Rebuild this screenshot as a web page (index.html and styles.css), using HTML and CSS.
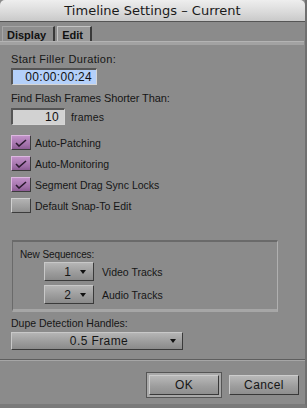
FILE: index.html
```html
<!DOCTYPE html>
<html>
<head>
<meta charset="utf-8">
<link rel="stylesheet" href="styles.css">
</head>
<body>
<div class="window">
  <div class="titlebar">Timeline Settings – Current</div>
  <div class="tabs">
    <div class="tab">Display</div>
    <div class="tab active">Edit</div>
  </div>
  <div class="strip"></div>
  <div class="content">
    <div class="label l1">Start Filler Duration:</div>
    <div class="field tc">00:00:00:24</div>
    <div class="label l2">Find Flash Frames Shorter Than:</div>
    <div class="row">
      <div class="field num">10</div>
      <span class="unit">frames</span>
    </div>
    <div class="checks">
      <div class="check"><span class="box on"><svg width="12" height="8" viewBox="0 0 12 8"><path d="M1 4 L4 7 L11 1" fill="none" stroke="#2a1a2e" stroke-width="1.6"/></svg></span>Auto-Patching</div>
      <div class="check"><span class="box on"><svg width="12" height="8" viewBox="0 0 12 8"><path d="M1 4 L4 7 L11 1" fill="none" stroke="#2a1a2e" stroke-width="1.6"/></svg></span>Auto-Monitoring</div>
      <div class="check"><span class="box on"><svg width="12" height="8" viewBox="0 0 12 8"><path d="M1 4 L4 7 L11 1" fill="none" stroke="#2a1a2e" stroke-width="1.6"/></svg></span>Segment Drag Sync Locks</div>
      <div class="check"><span class="box"></span>Default Snap-To Edit</div>
    </div>
    <div class="group">
      <div class="label glabel">New Sequences:</div>
      <div class="grow first">
        <div class="drop small"><span>1</span><i class="arrow"></i></div>
        <span>Video Tracks</span>
      </div>
      <div class="grow">
        <div class="drop small"><span>2</span><i class="arrow"></i></div>
        <span>Audio Tracks</span>
      </div>
    </div>
    <div class="label l3">Dupe Detection Handles:</div>
    <div class="drop wide"><span class="dtext">0.5 Frame</span><i class="arrow"></i></div>
  </div>
  <div class="footer">
    <div class="focus"><div class="btn">OK</div></div>
    <div class="btn">Cancel</div>
  </div>
</div>
</body>
</html>
```
FILE: styles.css
```css
html, body {
  margin: 0;
  padding: 0;
  background: #8b8b8b;
}
.window {
  width: 307px;
  height: 408px;
  background: #8b8b8b;
  font-family: "Liberation Sans", Arial, sans-serif;
  font-size: 10.5px;
  color: #161616;
  overflow: hidden;
  box-sizing: border-box;
  border-right: 2px solid #707070;
  border-bottom: 4px solid #7a7a7a;
}
.titlebar {
  height: 21px;
  line-height: 21px;
  text-align: center;
  font-family: "DejaVu Sans", sans-serif;
  font-size: 13px;
  color: #1a1a1a;
  background: linear-gradient(#eeeeee, #d9d9d9 60%, #c9c9c9);
  border-radius: 5px 5px 0 0;
  border-bottom: 1px solid #555;
}
.tabs {
  display: flex;
  height: 19px;
  padding-left: 2px;
  gap: 2px;
  align-items: flex-end;
}
.tab {
  box-sizing: border-box;
  height: 15px;
  line-height: 13px;
  padding: 2px 7px 0 4px;
  font-weight: bold;
  font-size: 11px;
  color: #111;
  background: #8e8e8e;
  border-top: 1px solid #a6a6a6;
  border-left: 1px solid #a6a6a6;
  border-right: 2px solid #3a3a3a;
}
.tab.active {
  background: #9a9a9a;
  border-top: 1px solid #c4c4c4;
  border-left: 1px solid #c4c4c4;
}
.strip {
  height: 3px;
  background: #a2a2a2;
  border-top: 1px solid #b3b3b3;
  margin-right: 1px;
}
.content {
  padding: 0 11px;
}
.label {
  height: 12px;
  line-height: 12px;
}
.l1 { margin-top: 8px; font-size: 11px; letter-spacing: 0.33px; }
.l2 { margin-top: 7px; font-size: 11px; letter-spacing: -0.1px; }
.l3 { margin-top: 5px; }
.field {
  box-sizing: border-box;
  border-top: 2px solid #555;
  border-left: 2px solid #555;
  border-right: 1px solid #d6d6d6;
  border-bottom: 1px solid #d6d6d6;
  text-align: right;
  font-size: 12px;
  letter-spacing: 0.3px;
  color: #111;
}
.tc {
  margin-top: 3px;
  width: 86px;
  height: 17px;
  line-height: 14px;
  background: #b4d0fa;
  padding-right: 4px;
}
.row {
  display: flex;
  align-items: center;
  margin-top: 4px;
}
.num {
  width: 54px;
  height: 17px;
  line-height: 14px;
  background: #d2d2d2;
  padding-right: 5px;
}
.unit {
  margin-left: 6px;
  letter-spacing: 0.2px;
}
.checks {
  margin-top: 10px;
  display: flex;
  flex-direction: column;
  gap: 6px;
}
.check {
  display: flex;
  align-items: center;
  height: 15px;
}
.box {
  box-sizing: border-box;
  width: 20px;
  height: 15px;
  margin-right: 4px;
  background: linear-gradient(#b3b3b3, #8f8f8f);
  border-top: 1px solid #d0d0d0;
  border-left: 1px solid #d0d0d0;
  border-right: 1px solid #3c3c3c;
  border-bottom: 1px solid #3c3c3c;
  display: flex;
  align-items: center;
  justify-content: center;
}
.box.on {
  background: linear-gradient(#c191c8, #a070a8 70%, #8c5c94);
  border-top-color: #dcb8e0;
  border-left-color: #dcb8e0;
}
.group {
  margin: 27px 16px 0 1px;
  height: 72px;
  box-sizing: border-box;
  border-top: 2px solid #6a6a6a;
  border-left: 1px solid #6a6a6a;
  border-right: 1px solid #b0b0b0;
  border-bottom: 3px solid #a6a6a6;
  padding: 7px 0 0 7px;
}
.glabel {
  font-size: 10px;
  letter-spacing: -0.1px;
}
.grow {
  display: flex;
  align-items: center;
  margin-left: 24px;
  margin-top: 4px;
}
.grow.first { margin-top: 1px; }
.drop {
  box-sizing: border-box;
  display: flex;
  align-items: center;
  background: linear-gradient(#b5b5b5, #9a9a9a 60%, #8a8a8a);
  border-top: 1px solid #c8c8c8;
  border-left: 1px solid #c8c8c8;
  border-right: 1px solid #3a3a3a;
  border-bottom: 1px solid #3a3a3a;
  font-size: 12px;
}
.drop.small {
  width: 50px;
  height: 19px;
  justify-content: flex-end;
  padding-right: 7px;
  margin-right: 8px;
  gap: 9px;
}
.arrow {
  width: 0;
  height: 0;
  border-left: 3.5px solid transparent;
  border-right: 3.5px solid transparent;
  border-top: 4px solid #111;
}
.drop.wide {
  margin-top: 3px;
  width: 172px;
  height: 18px;
  padding-right: 6px;
}
.dtext {
  flex: 1;
  text-align: center;
  padding-left: 16px;
  letter-spacing: 0.4px;
}
.footer {
  margin-top: 9px;
  border-top: 1px solid #5e5e5e;
  box-shadow: inset 0 1px 0 #a6a6a6;
  display: flex;
  justify-content: flex-end;
  align-items: flex-start;
  padding: 12px 6px 0 0;
  gap: 7px;
}
.focus {
  box-sizing: border-box;
  padding: 2px;
  border: 1px solid #555;
  background: #a8a8a8;
}
.btn {
  box-sizing: border-box;
  width: 70px;
  height: 20px;
  line-height: 18px;
  text-align: center;
  font-size: 12px;
  letter-spacing: 0.4px;
  background: linear-gradient(#b8b8b8, #9c9c9c 60%, #8e8e8e);
  border-top: 1px solid #cccccc;
  border-left: 1px solid #cccccc;
  border-right: 1px solid #383838;
  border-bottom: 1px solid #383838;
}
.footer > .btn { margin-top: 3px; }
```
